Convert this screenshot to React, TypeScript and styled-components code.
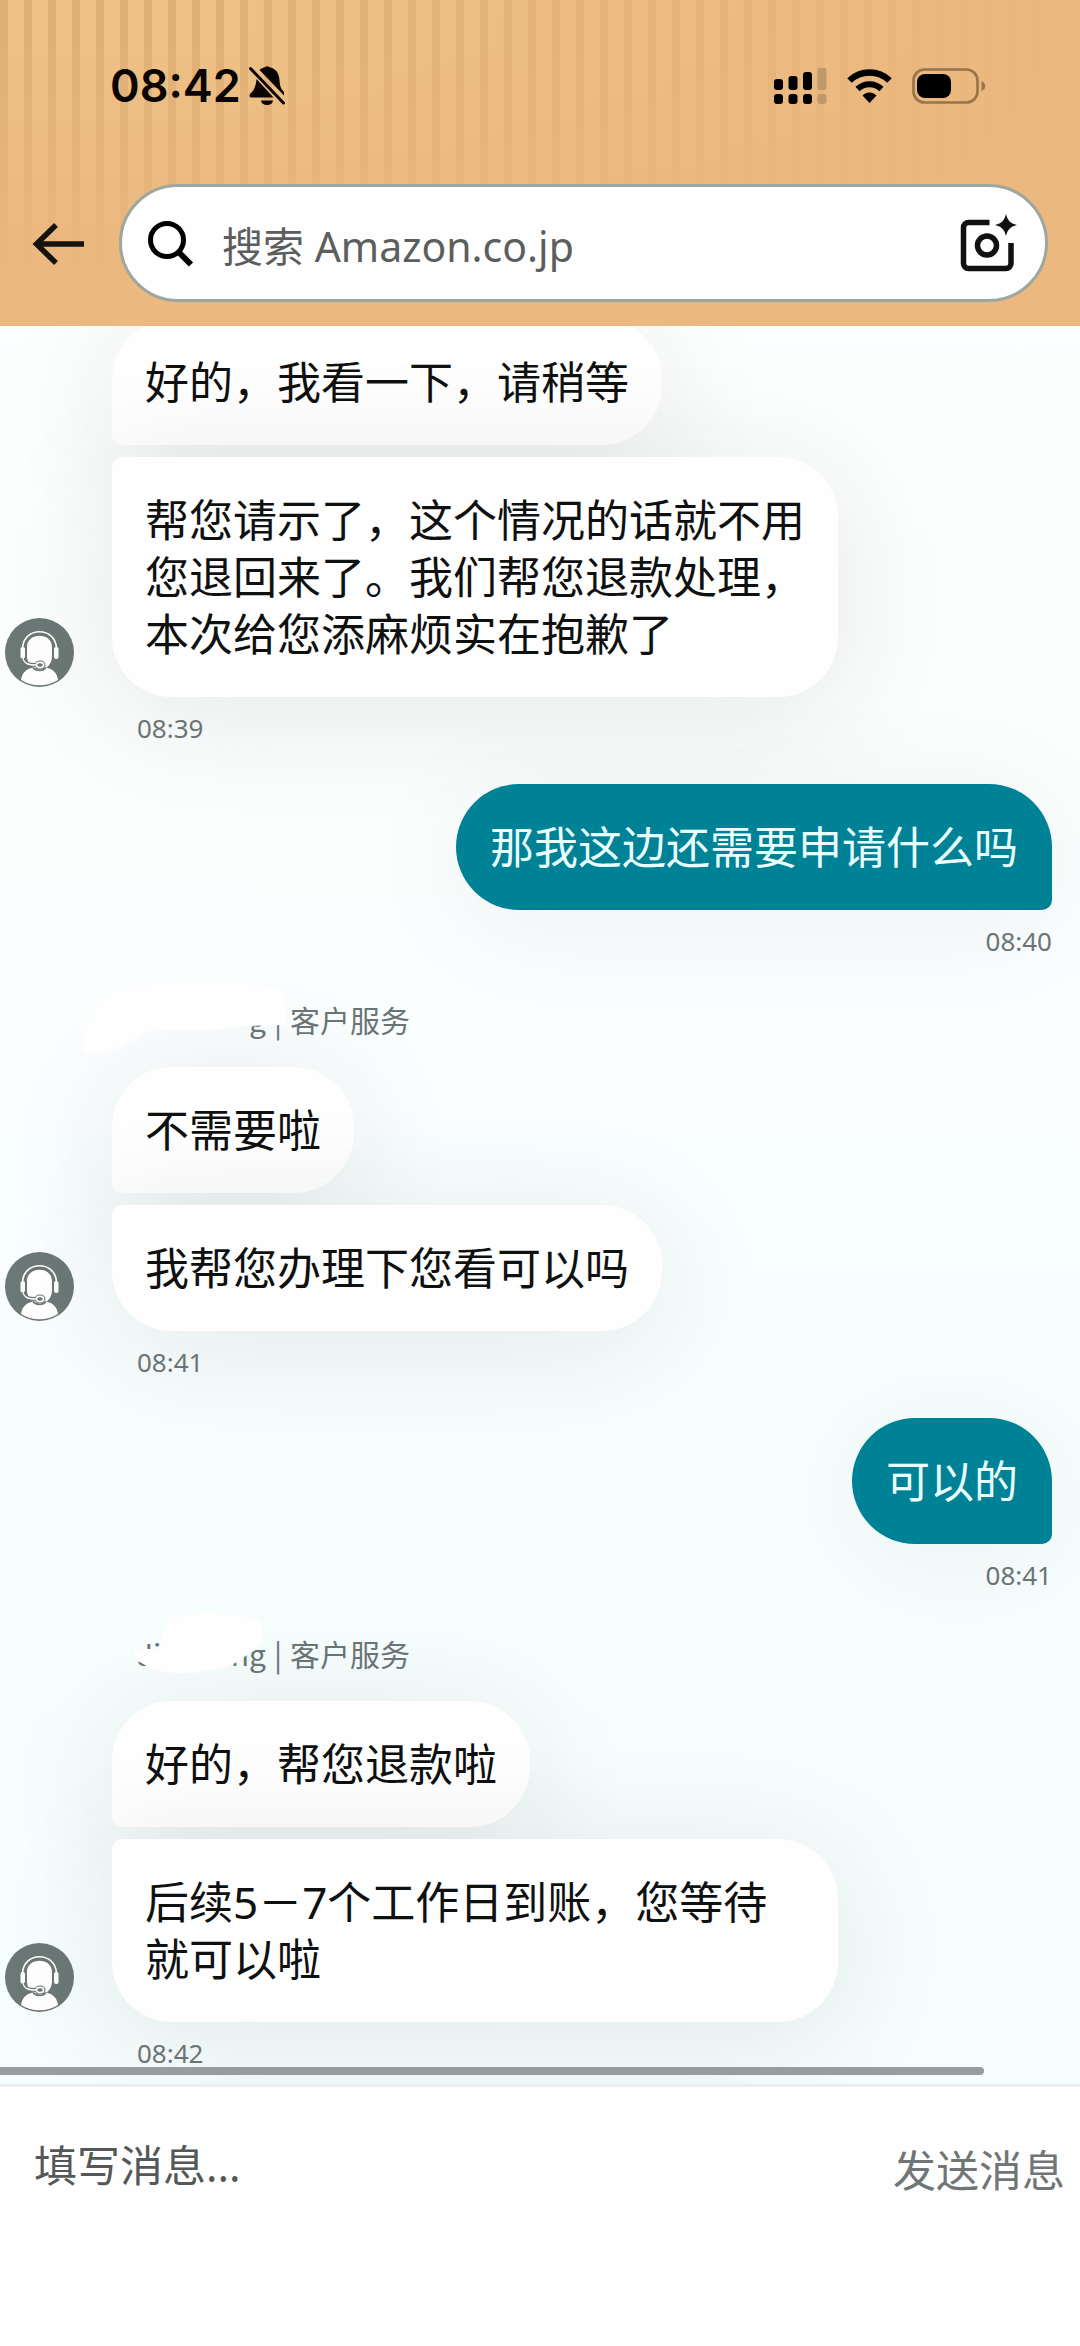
import React from "react";
import styled, { createGlobalStyle } from "styled-components";

const GlobalStyle = createGlobalStyle`
  *, *::before, *::after { box-sizing: border-box; }
  body {
    margin: 0;
    background: #fefefe;
    font-family: "Noto Sans", "Noto Sans CJK SC", sans-serif;
    color: #0f1111;
  }
  button, input { font: inherit; border: 0; background: none; padding: 0; }
`;

const Screen = styled.div`
  display: flex;
  flex-direction: column;
  height: 100vh;
  overflow: hidden;
`;

const Header = styled.header`
  flex: none;
  position: relative;
  z-index: 1;
  background:
    linear-gradient(97deg, transparent 20%, #ebb87f 100%),
    linear-gradient(180deg, transparent 15%, #ebb87f 85%),
    repeating-linear-gradient(90deg, #e0b077 0 8px, #eec085 8px 24px);
`;

const StatusBar = styled.div`
  display: flex;
  align-items: center;
  justify-content: space-between;
  height: 172px;
  padding: 0 94px 0 110px;
`;

const StatusGroup = styled.div<{ $gap: number }>`
  display: flex;
  align-items: center;
  gap: ${(p) => p.$gap}px;
`;

const Clock = styled.time`
  font: 600 45px/56px Inter, sans-serif;
  color: #0a0502;
`;

const SearchRow = styled.div`
  display: flex;
  align-items: center;
  gap: 32px;
  padding: 12px 32px 24px 32px;
`;

const IconButton = styled.button`
  display: flex;
  cursor: pointer;
`;

const SearchBox = styled.label`
  flex: 1;
  display: flex;
  align-items: center;
  gap: 28px;
  height: 118px;
  padding: 0 28px 0 24px;
  border: 3px solid #9da79f;
  border-radius: 60px;
  background: #fefefe;
`;

const SearchInput = styled.input`
  flex: 1;
  min-width: 0;
  height: 64px;
  padding-top: 6px;
  font-size: 41px;
  outline: 0;
  &::placeholder { color: #5c5e5e; opacity: 1; }
`;

const Chat = styled.main`
  position: relative;
  flex: 1;
  min-height: 0;
  display: flex;
  flex-direction: column;
  justify-content: flex-end;
  gap: 38px;
  padding: 0 28px 13px 5px;
  overflow: hidden;
  background: linear-gradient(180deg, #fdfefe 0%, #fbfefe 35%, #f6fefe 70%, #f6fdfd 100%);
`;

const AgentGroup = styled.section`
  display: flex;
  flex-direction: column;
`;

const AgentRow = styled.div`
  display: flex;
  align-items: flex-end;
  gap: 38px;
`;

const AvatarSlot = styled.div`
  flex: none;
  display: flex;
  padding-bottom: 10px;
`;

const BubbleStack = styled.div`
  display: flex;
  flex-direction: column;
  align-items: flex-start;
  gap: 12px;
`;

const UserGroup = styled.section`
  display: flex;
  flex-direction: column;
  align-items: flex-end;
`;

const Bubble = styled.p<{ $kind: "first" | "last" | "user" }>`
  margin: 0;
  max-width: 726px;
  padding: ${(p) => (p.$kind === "user" ? "35px 34px 34px" : "35px 33px 34px")};
  font-size: 44px;
  line-height: 57px;
  color: ${(p) => (p.$kind === "user" ? "#eaffff" : "#0f1111")};
  background: ${(p) => (p.$kind === "user" ? "#008296" : "#fefefe")};
  border-radius: ${(p) =>
    p.$kind === "first" ? "60px 60px 60px 10px" : p.$kind === "last" ? "10px 60px 60px 60px" : "63px 63px 10px 63px"};
  box-shadow: 0 14px 120px rgba(40, 40, 40, ${(p) => (p.$kind === "user" ? 0.06 : 0.1)});
`;

const Stamp = styled.time<{ $agent?: boolean }>`
  margin-top: 13px;
  padding-left: ${(p) => (p.$agent ? 132 : 0)}px;
  font-size: 26px;
  line-height: 36px;
  color: #6b7475;
`;

const AgentLabel = styled.div`
  position: relative;
  align-self: flex-start;
  display: flex;
  gap: 8px;
  margin: 0 0 26px 132px;
  font-family: "Noto Sans CJK SC", sans-serif;
  font-size: 30px;
  line-height: 44px;
  color: #6b7475;
`;

const AgentName = styled.span`
  display: flex;
  justify-content: space-between;
  width: 129px;
`;

const Smudge = styled.svg`
  position: absolute;
  left: -60px;
  top: -26px;
`;

const ScrollThumb = styled.div`
  position: absolute;
  left: 0;
  right: 96px;
  bottom: 9px;
  height: 8px;
  border-radius: 0 4px 4px 0;
  background: #989c9c;
`;

const Composer = styled.form`
  flex: none;
  display: flex;
  align-items: flex-start;
  gap: 24px;
  height: 262px;
  padding: 48px 15px 0 34px;
  border-top: 3px solid #eaf0ef;
  background: #fefefe;
`;

const MessageInput = styled.input`
  flex: 1;
  min-width: 0;
  height: 60px;
  font-size: 43px;
  outline: 0;
  &::placeholder { color: #555858; opacity: 1; }
`;

const SendButton = styled.button`
  margin-top: 6px;
  font-size: 43px;
  line-height: 60px;
  color: #707575;
  cursor: pointer;
`;

const MutedBell = () => (
  <svg width="36" height="40" viewBox="0 0 36 40" aria-hidden="true">
    <path d="M10.500 4C12.500 2 14 2 15 1.500c1.500-1.500 5-1.500 6.500 0C28 3.500 30 8 30.500 14c.3 6 1.500 9 4.500 12v3.500z" fill="#0a0502" />
    <path d="M7.500 13 24.500 31.500H2.500C0 31.500 0 29 1.500 27.500 5 24.500 7 20 7.500 13z" fill="#0a0502" />
    <path d="M12 34.500h12c-.5 6-11.500 6-12 0z" fill="#0a0502" />
    <path d="M1.500 2.500 34.500 37" stroke="#0a0502" strokeWidth="3" strokeLinecap="round" />
  </svg>
);

const Signal = () => (
  <svg width="53" height="38" viewBox="0 0 53 38" aria-hidden="true">
    <g fill="#000">
      <rect x="0" y="12" width="9" height="11" rx="3" />
      <rect x="14.500" y="9" width="9" height="14" rx="3" />
      <rect x="29" y="5" width="9" height="18" rx="3" />
      <rect x="0" y="27" width="9" height="10" rx="3" />
      <rect x="14.500" y="27" width="9" height="10" rx="3" />
      <rect x="29" y="27" width="9" height="10" rx="3" />
    </g>
    <g fill="#bf9967">
      <rect x="43.500" y="1" width="9" height="22" rx="2" />
      <rect x="43.500" y="27" width="9" height="10" rx="3" />
    </g>
  </svg>
);

const Wifi = () => (
  <svg width="45" height="34" viewBox="0 0 45 34" aria-hidden="true">
    <path d="M2.500 11.500a29 29 0 0 1 40 0" fill="none" stroke="#000" strokeWidth="6.500" />
    <path d="M10.500 20a17.500 17.500 0 0 1 24 0" fill="none" stroke="#000" strokeWidth="6" />
    <path d="M15.500 26.500c4-4 10-4 14 0L22.500 34z" fill="#000" />
  </svg>
);

const Battery = () => (
  <svg width="74" height="36" viewBox="0 0 74 36" aria-hidden="true">
    <rect x="1.500" y="1.500" width="64" height="33" rx="11" fill="none" stroke="#97744a" strokeWidth="2.600" />
    <rect x="5" y="6" width="34" height="24" rx="8" fill="#000" />
    <path d="M69.500 13c5 2 5 8 0 10z" fill="#97744a" />
  </svg>
);

const BackArrow = () => (
  <svg width="55" height="44" viewBox="0 0 55 44" fill="none" stroke="#15130f" strokeWidth="5.500" aria-hidden="true">
    <path d="M52 23H5M24 4 4.500 23 24 42" />
  </svg>
);

const SearchGlass = () => (
  <svg width="48" height="48" viewBox="0 0 48 48" fill="none" stroke="#000" aria-hidden="true">
    <circle cx="21" cy="21" r="16.500" strokeWidth="5" />
    <path d="M32.500 33 45 45.500" strokeWidth="6" />
  </svg>
);

const CameraSpark = () => (
  <svg width="57" height="58" viewBox="0 0 57 58" fill="none" stroke="#111" strokeWidth="5.500" aria-hidden="true">
    <path d="M29.500 8.500H8.500a5 5 0 0 0-5 5v36a5 5 0 0 0 5 5h37.500a5 5 0 0 0 5-5V29" />
    <circle cx="27" cy="31.500" r="9.500" />
    <path d="M46 0c2 7 4 9 11 11-7 2-9 4-11 11-2-7-4-9-11-11 7-2 9-4 11-11z" fill="#111" stroke="none" />
  </svg>
);

const AgentAvatar = () => (
  <svg width="69" height="69" viewBox="0 0 69 69" role="img" aria-label="客户服务">
    <circle cx="34.500" cy="34.500" r="34.500" fill="#6b7876" />
    <path d="M16 62c1-7 5-11 12-12.500 3 4 10 4 13 0C48 51 52 55 53 62c-11 7-26 7-37 0z" fill="#fff" />
    <path d="M22 29c0-15 25-15 25 0v9c0 6-3 10-7 13-3 2-9 1-12-2-4-3-6-6-6-11z" fill="#fff" />
    <path d="M28 49.500c3 4 10 4 13 0" fill="none" stroke="#6b7876" strokeWidth="1.600" />
    <path d="M17.500 31c0-23 34-23 34 0" fill="none" stroke="#fff" strokeWidth="1.600" />
    <rect x="15.500" y="29" width="4.500" height="12" rx="2" fill="#fff" />
    <rect x="49" y="29" width="4.500" height="12" rx="2" fill="#fff" />
    <path d="M18 40c1 6 6 7 13 7" fill="none" stroke="#6b7876" strokeWidth="4" />
    <ellipse cx="35" cy="47" rx="5.500" ry="4.500" fill="#6b7876" />
    <path d="M18 40c1 6 6 7 13 7" fill="none" stroke="#fff" strokeWidth="1.400" />
    <ellipse cx="35" cy="47" rx="3.600" ry="2.600" fill="#6b7876" stroke="#fff" strokeWidth="1.600" />
  </svg>
);

type AgentMessagesProps = { messages: string[]; time: string; children?: React.ReactNode };

const AgentMessages = ({ messages, time, children }: AgentMessagesProps) => (
  <AgentGroup>
    {children}
    <AgentRow>
      <AvatarSlot>
        <AgentAvatar />
      </AvatarSlot>
      <BubbleStack>
        {messages.map((text, i) => (
          <Bubble key={text} $kind={i === 0 ? "first" : "last"}>
            {text}
          </Bubble>
        ))}
      </BubbleStack>
    </AgentRow>
    <Stamp $agent>{time}</Stamp>
  </AgentGroup>
);

const UserMessage = ({ text, time }: { text: string; time: string }) => (
  <UserGroup>
    <Bubble $kind="user">{text}</Bubble>
    <Stamp>{time}</Stamp>
  </UserGroup>
);

const Label = ({ start, end, mask }: { start: string; end: string; mask: string }) => (
  <AgentLabel>
    <AgentName>
      <span>{start}</span>
      <span>{end}</span>
    </AgentName>
    <span>|</span>
    <span>客户服务</span>
    <Smudge width="230" height="100" viewBox="0 0 230 100" aria-hidden="true">
      <path d={mask} fill="#fefefe" />
    </Smudge>
  </AgentLabel>
);

export default function App() {
  return (
    <>
      <GlobalStyle />
      <Screen>
        <Header>
          <StatusBar>
            <StatusGroup $gap={8}>
              <Clock>08:42</Clock>
              <MutedBell />
            </StatusGroup>
            <StatusGroup $gap={20}>
              <Signal />
              <Wifi />
              <Battery />
            </StatusGroup>
          </StatusBar>
          <SearchRow>
            <IconButton type="button" aria-label="返回">
              <BackArrow />
            </IconButton>
            <SearchBox>
              <SearchGlass />
              <SearchInput type="search" aria-label="搜索" placeholder="搜索 Amazon.co.jp" />
              <IconButton type="button" aria-label="相机">
                <CameraSpark />
              </IconButton>
            </SearchBox>
          </SearchRow>
        </Header>
        <Chat>
          <AgentMessages
            messages={[
              "好的，我看一下，请稍等",
              "帮您请示了，这个情况的话就不用您退回来了。我们帮您退款处理，本次给您添麻烦实在抱歉了",
            ]}
            time="08:39"
          />
          <UserMessage text="那我这边还需要申请什么吗" time="08:40" />
          <AgentMessages messages={["不需要啦", "我帮您办理下您看可以吗"]} time="08:41">
            <Label start="" end="g" mask="M30 20C80 8 180 8 208 20L208 54 170 55 150 58 70 60C50 72 25 90 8 82 0 70 15 40 30 20z" />
          </AgentMessages>
          <UserMessage text="可以的" time="08:41" />
          <AgentMessages messages={["好的，帮您退款啦", "后续5－7个工作日到账，您等待就可以啦"]} time="08:42">
            <Label start="Ji" end="ng" mask="M58 44H82L90 14C120 6 165 8 184 16L186 38 174 47 162 56 150 62C120 70 80 70 68 60L58 54z" />
          </AgentMessages>
          <ScrollThumb />
        </Chat>
        <Composer onSubmit={(e) => e.preventDefault()}>
          <MessageInput type="text" aria-label="填写消息" placeholder="填写消息..." />
          <SendButton type="submit">发送消息</SendButton>
        </Composer>
      </Screen>
    </>
  );
}
